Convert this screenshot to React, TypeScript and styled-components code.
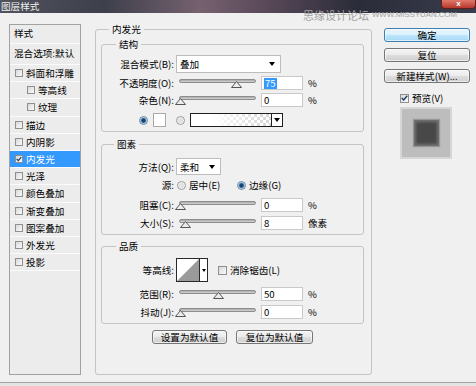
import styled, { createGlobalStyle } from "styled-components";

const GlobalStyle = createGlobalStyle`
  html, body {
    margin: 0;
    padding: 0;
    background: #f0f0f0;
  }
  body {
    font-family: "Noto Sans CJK SC", "Liberation Sans", sans-serif;
    font-size: 9.6px;
    color: #000;
  }
`;

const Window = styled.div`
  position: relative;
  width: 476px;
  height: 386px;
  overflow: hidden;
  background: #f0f0f0;
  box-shadow: inset 0 -3px 0 #e4e4e4, inset 0 -4px 0 #a3a3a3;
`;

const TitleBar = styled.div`
  height: 13px;
  display: flex;
  justify-content: space-between;
  align-items: flex-start;
  background: linear-gradient(
    90deg,
    #50535d 0%,
    #3d404b 22%,
    #76616f 42%,
    #5b4a5a 55%,
    #2b2c39 75%,
    #383c4c 100%
  );
`;

const Title = styled.span`
  color: #f2f2f2;
  font-size: 9.6px;
  line-height: 12px;
  padding-left: 1px;
`;

const CloseButton = styled.div`
  width: 35px;
  height: 9px;
  box-sizing: border-box;
  border: 1px solid #5e201b;
  border-top: none;
  border-radius: 0 0 4px 4px;
  background: linear-gradient(#e07a6c, #b7372b);
  color: #fff;
  font: bold 8px/7px "Liberation Sans", sans-serif;
  text-align: center;
`;

const Watermark = styled.div`
  position: absolute;
  top: 8px;
  left: 303px;
  display: flex;
  align-items: center;
  gap: 3px;
  color: #a3a3a3;
  pointer-events: none;
`;

const WatermarkCn = styled.span`
  font-size: 11px;
  line-height: 14px;
`;

const WatermarkUrl = styled.span`
  font-family: "Liberation Sans", sans-serif;
  font-size: 7.8px;
  line-height: 14px;
`;

const Body = styled.div`
  display: flex;
  align-items: flex-start;
  padding: 10px 0 0 9px;
`;

/* left styles list */

const StyleList = styled.div`
  width: 72px;
  height: 351px;
  margin-top: 1px;
  box-sizing: border-box;
  border: 1px solid #a2a2a2;
  background: #ececec;
  display: flex;
  flex-direction: column;
`;

const ListHeader = styled.div<{ $h: number }>`
  height: ${(p) => p.$h}px;
  line-height: ${(p) => p.$h - 1}px;
  padding-left: 4px;
  border-bottom: 1px solid #fbfbfb;
  white-space: nowrap;
  overflow: hidden;
`;

const ListItem = styled.div<{ $indent?: boolean; $active?: boolean }>`
  height: 17.2px;
  box-sizing: border-box;
  border-bottom: 1px solid #fbfbfb;
  display: flex;
  align-items: center;
  gap: 3px;
  padding-left: ${(p) => (p.$indent ? 17 : 5)}px;
  background: ${(p) => (p.$active ? "#3399ff" : "transparent")};
  color: ${(p) => (p.$active ? "#fff" : "#000")};
  white-space: nowrap;
`;

const Box = styled.span<{ $size?: number }>`
  display: inline-flex;
  align-items: center;
  justify-content: center;
  flex-shrink: 0;
  width: ${(p) => p.$size ?? 8}px;
  height: ${(p) => p.$size ?? 8}px;
  box-sizing: border-box;
  border: 1px solid #8f8f8f;
  background: linear-gradient(135deg, #d8d8d8, #fbfbfb);
`;

const CheckBox = ({ checked, size }: { checked?: boolean; size?: number }) => (
  <Box $size={size}>
    {checked && (
      <svg width="7" height="6" viewBox="0 0 7 6">
        <path d="M0.8 3 L2.7 5 L6.2 0.8" fill="none" stroke="#1d3f66" strokeWidth="1.4" />
      </svg>
    )}
  </Box>
);

/* main group boxes */

const MainGroup = styled.fieldset`
  margin: 0 0 0 14px;
  width: 277px;
  height: 352px;
  min-width: 0;
  box-sizing: border-box;
  border: 1px solid #c4c4c4;
  border-radius: 3px;
  padding: 3px 7px 0 5px;
`;

const Legend = styled.legend<{ $offset: number }>`
  padding: 0 3px;
  margin-left: ${(p) => p.$offset}px;
  font-size: 9.6px;
  line-height: 12px;
`;

const SubGroup = styled.fieldset<{ $top: number; $mt?: number }>`
  margin: ${(p) => p.$mt ?? 0}px 0 0 0;
  min-width: 0;
  box-sizing: border-box;
  border: 1px solid #c4c4c4;
  border-radius: 3px;
  padding: ${(p) => p.$top}px 0 4px 0;
`;

const Row = styled.div<{ $h: number; $mt?: number }>`
  display: flex;
  align-items: center;
  height: ${(p) => p.$h}px;
  margin-top: ${(p) => p.$mt ?? 0}px;
  white-space: nowrap;
`;

const Label = styled.span`
  width: 72px;
  flex-shrink: 0;
  text-align: right;
`;

const Select = styled.div<{ $w: number }>`
  margin-left: 2px;
  width: ${(p) => p.$w}px;
  height: 100%;
  box-sizing: border-box;
  border: 1px solid #bdbdbd;
  background: #fff;
  display: flex;
  align-items: center;
  justify-content: space-between;
  padding: 0 5px 0 3px;
`;

const Caret = styled.span`
  width: 0;
  height: 0;
  border-left: 3px solid transparent;
  border-right: 3px solid transparent;
  border-top: 4px solid #000;
`;

const SliderBox = styled.div`
  position: relative;
  margin-left: 5px;
  width: 77px;
  height: 14px;
  flex-shrink: 0;
  padding-top: 3px;
  box-sizing: border-box;
`;

const Track = styled.div`
  height: 4px;
  box-sizing: border-box;
  border: 1px solid #8d8d8d;
  border-radius: 2px;
  background: linear-gradient(#a9a9a9, #d4d4d4);
`;

const Thumb = styled.svg<{ $pos: number }>`
  position: absolute;
  top: 5px;
  left: ${(p) => p.$pos * 75 - 4}px;
`;

const Slider = ({ value }: { value: number }) => (
  <SliderBox>
    <Track />
    <Thumb $pos={value} width="11" height="7" viewBox="0 0 11 7">
      <polygon points="5.5,0.5 10.5,6.5 0.5,6.5" fill="#ececec" stroke="#555" strokeWidth="1" />
    </Thumb>
  </SliderBox>
);

const NumInput = styled.div`
  margin-left: 5px;
  width: 42px;
  height: 14px;
  box-sizing: border-box;
  border: 1px solid #c9c9c9;
  background: #fff;
  padding-left: 2px;
  display: flex;
  align-items: center;
`;

const Selected = styled.span`
  background: #3399ff;
  color: #fff;
  padding: 0 1px;
  line-height: 11px;
`;

const Unit = styled.span`
  margin-left: 5px;
`;

const RadioDot = styled.span<{ $on?: boolean; $ml?: number }>`
  flex-shrink: 0;
  width: 9px;
  height: 9px;
  margin-left: ${(p) => p.$ml ?? 0}px;
  box-sizing: border-box;
  border-radius: 50%;
  border: 1px solid ${(p) => (p.$on ? "#6e8aa6" : "#9a9a9a")};
  background: ${(p) =>
    p.$on
      ? "radial-gradient(circle, #17466f 0 1.8px, #6b9cc6 2.4px, #dfe9f3 3.6px)"
      : "radial-gradient(circle, #e2e2e2 0 2px, #f6f6f6 3.5px)"};
`;

const RadioOption = styled.span<{ $w?: number; $ml?: number }>`
  display: flex;
  align-items: center;
  gap: 3px;
  margin-left: ${(p) => p.$ml ?? 0}px;
  width: ${(p) => (p.$w ? `${p.$w}px` : "auto")};
`;

const ColorSwatch = styled.span`
  margin-left: 5px;
  width: 13px;
  height: 14px;
  box-sizing: border-box;
  border: 1px solid #a8a8a8;
  background: #fff;
`;

const GradientPicker = styled.div`
  margin-left: 5px;
  display: flex;
  height: 14px;
  box-sizing: border-box;
  border: 1px solid #1e1e1e;
`;

const GradientSwatch = styled.span`
  width: 80px;
  height: 100%;
  background: linear-gradient(90deg, #fff 0%, #fff 25%, rgba(255, 255, 255, 0) 100%),
    repeating-conic-gradient(#d4d4d4 0 25%, #fff 0 50%) 0 0 / 6px 6px;
`;

const ArrowButton = styled.span`
  width: 11px;
  height: 100%;
  box-sizing: border-box;
  border-left: 1px solid #1e1e1e;
  background: #fff;
  display: flex;
  align-items: center;
  justify-content: center;
`;

const ContourPicker = styled.div`
  margin-left: 2px;
  display: flex;
  height: 24px;
  box-sizing: border-box;
  border: 1px solid #2a2a2a;
  background: #fff;
`;

const ContourArrow = styled.span`
  width: 8px;
  box-sizing: border-box;
  border-left: 1px solid #2a2a2a;
  display: flex;
  align-items: center;
  justify-content: center;
`;

const SmallCaret = styled.span`
  width: 0;
  height: 0;
  border-left: 2px solid transparent;
  border-right: 2px solid transparent;
  border-top: 3px solid #000;
`;

const CheckOption = styled.span`
  display: flex;
  align-items: center;
  gap: 3px;
  margin-left: 10px;
`;

const ButtonRow = styled.div`
  display: flex;
  justify-content: center;
  gap: 9px;
  margin-top: 6px;
`;

const Button = styled.div<{ $w?: number; $primary?: boolean }>`
  width: ${(p) => (p.$w ? `${p.$w}px` : "100%")};
  height: 14px;
  box-sizing: border-box;
  border: 1px solid ${(p) => (p.$primary ? "#3c7fb1" : "#767676")};
  border-radius: 3px;
  background: ${(p) =>
    p.$primary
      ? "linear-gradient(#eaf6fd 0%, #d9f0fc 50%, #bee6fd 51%, #a7d9f5 100%)"
      : "linear-gradient(#f4f4f4 0%, #ebebeb 50%, #dddddd 51%, #cfcfcf 100%)"};
  box-shadow: inset 0 0 0 1px rgba(255, 255, 255, 0.6);
  display: flex;
  align-items: center;
  justify-content: center;
  line-height: 12px;
  white-space: nowrap;
`;

/* right column */

const Side = styled.div`
  margin: 5px 0 0 12px;
  width: 86px;
  display: flex;
  flex-direction: column;
`;

const SideGap = styled.div<{ $h: number }>`
  height: ${(p) => p.$h}px;
`;

const PreviewToggle = styled.div`
  display: flex;
  align-items: center;
  gap: 3px;
  height: 10px;
  margin: 10px 0 0 16px;
  white-space: nowrap;
`;

const PreviewFrame = styled.div`
  margin: 4px 0 0 16px;
  width: 52px;
  height: 52px;
  box-sizing: border-box;
  border: 2px solid #d6d6d6;
  background: #bdbdbd;
  display: flex;
  align-items: center;
  justify-content: center;
`;

const PreviewSquare = styled.div`
  width: 25px;
  height: 26px;
  background: #484848;
  box-shadow: inset 0 0 3px 2px rgba(150, 150, 150, 0.55), 0 0 1px 1px rgba(80, 80, 80, 0.35);
`;

const listItems: { name: string; indent?: boolean; active?: boolean }[] = [
  { name: "斜面和浮雕" },
  { name: "等高线", indent: true },
  { name: "纹理", indent: true },
  { name: "描边" },
  { name: "内阴影" },
  { name: "内发光", active: true },
  { name: "光泽" },
  { name: "颜色叠加" },
  { name: "渐变叠加" },
  { name: "图案叠加" },
  { name: "外发光" },
  { name: "投影" },
];

const SliderRow = ({
  label,
  value,
  pos,
  unit,
  mt,
  selected,
}: {
  label: string;
  value: string;
  pos: number;
  unit: string;
  mt: number;
  selected?: boolean;
}) => (
  <Row $h={14} $mt={mt}>
    <Label>{label}</Label>
    <Slider value={pos} />
    <NumInput>{selected ? <Selected>{value}</Selected> : value}</NumInput>
    <Unit>{unit}</Unit>
  </Row>
);

export default function App() {
  return (
    <Window>
      <GlobalStyle />
      <TitleBar>
        <Title>图层样式</Title>
        <CloseButton>x</CloseButton>
      </TitleBar>
      <Watermark>
        <WatermarkCn>思缘设计论坛</WatermarkCn>
        <WatermarkUrl>WWW.MISSYUAN.COM</WatermarkUrl>
      </Watermark>

      <Body>
        <StyleList>
          <ListHeader $h={18}>样式</ListHeader>
          <ListHeader $h={20}>混合选项:默认</ListHeader>
          {listItems.map((item) => (
            <ListItem key={item.name} $indent={item.indent} $active={item.active}>
              <CheckBox checked={item.active} />
              <span>{item.name}</span>
            </ListItem>
          ))}
        </StyleList>

        <MainGroup>
          <Legend $offset={8}>内发光</Legend>

          <SubGroup $top={5}>
            <Legend $offset={14}>结构</Legend>
            <Row $h={18}>
              <Label>混合模式(B):</Label>
              <Select $w={105}>
                <span>叠加</span>
                <Caret />
              </Select>
            </Row>
            <SliderRow label="不透明度(O):" value="75" pos={0.75} unit="%" mt={3} selected />
            <SliderRow label="杂色(N):" value="0" pos={0} unit="%" mt={3} />
            <Row $h={14} $mt={6}>
              <RadioDot $on $ml={37} />
              <ColorSwatch />
              <RadioDot $ml={10} />
              <GradientPicker>
                <GradientSwatch />
                <ArrowButton>
                  <Caret />
                </ArrowButton>
              </GradientPicker>
            </Row>
          </SubGroup>

          <SubGroup $top={8} $mt={6}>
            <Legend $offset={12}>图素</Legend>
            <Row $h={17}>
              <Label>方法(Q):</Label>
              <Select $w={45}>
                <span>柔和</span>
                <Caret />
              </Select>
            </Row>
            <Row $h={14} $mt={3}>
              <Label>源:</Label>
              <RadioOption $w={60} $ml={3}>
                <RadioDot />
                <span>居中(E)</span>
              </RadioOption>
              <RadioOption>
                <RadioDot $on />
                <span>边缘(G)</span>
              </RadioOption>
            </Row>
            <SliderRow label="阻塞(C):" value="0" pos={0} unit="%" mt={6} />
            <SliderRow label="大小(S):" value="8" pos={0.067} unit="像素" mt={4} />
          </SubGroup>

          <SubGroup $top={6} $mt={5}>
            <Legend $offset={14}>品质</Legend>
            <Row $h={24}>
              <Label>等高线:</Label>
              <ContourPicker>
                <svg width="22" height="22" viewBox="0 0 22 22">
                  <polygon points="0,22 22,0 22,22" fill="#9a9a9a" />
                </svg>
                <ContourArrow>
                  <SmallCaret />
                </ContourArrow>
              </ContourPicker>
              <CheckOption>
                <CheckBox size={9} />
                <span>消除锯齿(L)</span>
              </CheckOption>
            </Row>
            <SliderRow label="范围(R):" value="50" pos={0.5} unit="%" mt={5} />
            <SliderRow label="抖动(J):" value="0" pos={0} unit="%" mt={4} />
          </SubGroup>

          <ButtonRow>
            <Button $w={75}>设置为默认值</Button>
            <Button $w={77}>复位为默认值</Button>
          </ButtonRow>
        </MainGroup>

        <Side>
          <Button $primary>确定</Button>
          <SideGap $h={6} />
          <Button>复位</Button>
          <SideGap $h={7} />
          <Button>新建样式(W)...</Button>
          <PreviewToggle>
            <CheckBox checked size={9} />
            <span>预览(V)</span>
          </PreviewToggle>
          <PreviewFrame>
            <PreviewSquare />
          </PreviewFrame>
        </Side>
      </Body>
    </Window>
  );
}
